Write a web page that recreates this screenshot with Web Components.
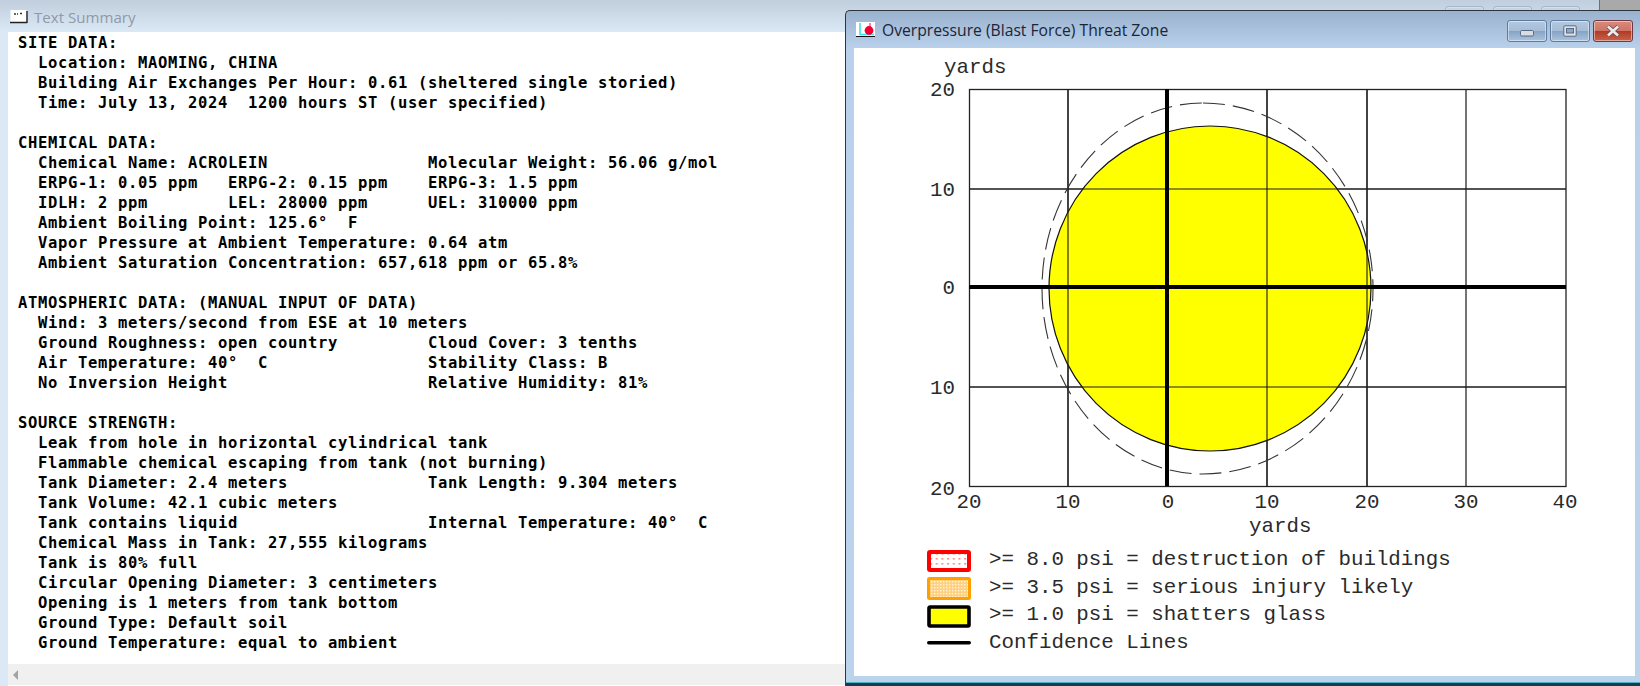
<!DOCTYPE html>
<html><head><meta charset="utf-8"><title>Threat Zone</title>
<style>html,body{margin:0;padding:0;width:1640px;height:686px;overflow:hidden;background:#fff}</style></head>
<body>
<app-desktop>
<text-window title-text="Text Summary"><pre>SITE DATA:
  Location: MAOMING, CHINA
  Building Air Exchanges Per Hour: 0.61 (sheltered single storied)
  Time: July 13, 2024  1200 hours ST (user specified)

CHEMICAL DATA:
  Chemical Name: ACROLEIN                Molecular Weight: 56.06 g/mol
  ERPG-1: 0.05 ppm   ERPG-2: 0.15 ppm    ERPG-3: 1.5 ppm
  IDLH: 2 ppm        LEL: 28000 ppm      UEL: 310000 ppm
  Ambient Boiling Point: 125.6°  F
  Vapor Pressure at Ambient Temperature: 0.64 atm
  Ambient Saturation Concentration: 657,618 ppm or 65.8%

ATMOSPHERIC DATA: (MANUAL INPUT OF DATA)
  Wind: 3 meters/second from ESE at 10 meters
  Ground Roughness: open country         Cloud Cover: 3 tenths
  Air Temperature: 40°  C                Stability Class: B
  No Inversion Height                    Relative Humidity: 81%

SOURCE STRENGTH:
  Leak from hole in horizontal cylindrical tank
  Flammable chemical escaping from tank (not burning)
  Tank Diameter: 2.4 meters              Tank Length: 9.304 meters
  Tank Volume: 42.1 cubic meters
  Tank contains liquid                   Internal Temperature: 40°  C
  Chemical Mass in Tank: 27,555 kilograms
  Tank is 80% full
  Circular Opening Diameter: 3 centimeters
  Opening is 1 meters from tank bottom
  Ground Type: Default soil
  Ground Temperature: equal to ambient</pre></text-window>
<threat-window title-text="Overpressure (Blast Force) Threat Zone">
  <threat-plot></threat-plot>
  <threat-legend>
    <legend-row kind="red">&gt;= 8.0 psi = destruction of buildings</legend-row>
    <legend-row kind="orange">&gt;= 3.5 psi = serious injury likely</legend-row>
    <legend-row kind="yellow">&gt;= 1.0 psi = shatters glass</legend-row>
    <legend-row kind="line">Confidence Lines</legend-row>
  </threat-legend>
</threat-window>
</app-desktop>
<script>
function def(name, html, init){
  customElements.define(name, class extends HTMLElement{
    constructor(){super();const r=this.attachShadow({mode:'open'});r.innerHTML=html;if(init)init(this,r);}
    connectedCallback(){const t=this.shadowRoot.querySelector('[data-title]');if(t)t.textContent=this.getAttribute('title-text')||'';
      const k=this.getAttribute('kind'),s=this.shadowRoot.getElementById('s');if(s&&k)s.innerHTML=swatch(k);}
  });
}
function swatch(k){
  if(k=='red')return `<svg width="44" height="22" viewBox="0 0 44 22"><defs><pattern id="p" x="1" y="1" width="5.7" height="5" patternUnits="userSpaceOnUse"><rect width="5.7" height="5" fill="#fff"/><rect x="2" y="2" width="2" height="1.6" fill="#f88"/></pattern></defs><rect x="2" y="2" width="40" height="18" rx="1" fill="url(#p)" stroke="#f00" stroke-width="4"/></svg>`;
  if(k=='orange')return `<svg width="44" height="23" viewBox="0 0 44 23"><defs><pattern id="p" width="3" height="3" patternUnits="userSpaceOnUse"><rect width="3" height="3" fill="#ffd080"/><rect x="1" y="1" width="1.4" height="1.4" fill="#fff4dc"/></pattern></defs><rect x="1.5" y="1.5" width="41" height="20" rx="1" fill="url(#p)" stroke="#ffa000" stroke-width="3"/></svg>`;
  if(k=='yellow')return `<svg width="44" height="23"><rect x="2" y="2" width="40" height="19" rx="1" fill="#ff0" stroke="#000" stroke-width="3.6"/></svg>`;
  return `<svg width="44" height="6"><rect y="1" width="44" height="3.6" rx="1.8" fill="#000"/></svg>`;
}
def('app-desktop',`<style>:host{display:block;position:relative;width:1640px;height:686px;overflow:hidden}</style><slot></slot>`);

def('text-window',`<style>
:host{display:flex;flex-direction:column;width:1640px;height:686px;background:#dce8f5;box-sizing:border-box}
.bar{height:32px;flex:none;display:flex;align-items:center;gap:6px;padding:0 0 0 10px;box-sizing:border-box;
 background:linear-gradient(#c0cedd,#dbe8f5);font:15.1px "Open Sans",sans-serif;color:#8f9aa6}
.bar>svg,.bar>span{position:relative;top:1px}
.sp{flex:1}
.mini{align-self:flex-start;margin:6px 3px 0 0;width:39px;height:20px;box-sizing:border-box;border:1px solid #a3b6ca;border-radius:3px;background:#c6d3e0;box-shadow:inset 0 0 0 1px #d7e0ea}
.mini.last{margin-right:13px}
.grey{align-self:stretch;width:40px;background:#a9a9a9;border-left:1px solid #6f6f6f}
.body{flex:1;margin-left:8px;background:#fff;display:flex;flex-direction:column;min-height:0}
.txt{flex:1;padding:1px 0 0 10px;min-height:0}
::slotted(pre){margin:0;font:bold 15.5px/20px "DejaVu Sans Mono",monospace;letter-spacing:.67px;color:#000}
.scroll{height:21px;flex:none;background:#f0f0f0;display:flex;align-items:center;padding-left:5px;margin-bottom:1px}
</style>
<div class="bar"><svg width="18" height="16" viewBox="0 0 18 16"><rect x=".5" y="1" width="16" height="12" fill="#fff"/><path d="M0 13.5H17M17 2V14" stroke="#222" stroke-width="1.4"/><path d="M4 5h2M7 5h1M10 4.5h2" stroke="#333" stroke-width="1.4"/></svg><span data-title></span><i class="sp"></i><i class="mini"></i><i class="mini"></i><i class="mini last"></i><i class="grey"></i></div>
<div class="body"><div class="txt"><slot></slot></div>
<div class="scroll"><svg width="6" height="10"><path d="M5 0V10L0 5Z" fill="#a3a3a3"/></svg></div></div>`);

def('window-buttons',`<style>
:host{display:flex;gap:3px}
.b{width:40px;height:22px;box-sizing:border-box;border:1px solid #5f7b9e;border-radius:3px;display:flex;align-items:center;justify-content:center;
 background:linear-gradient(#b4c9e0 0,#a6bdd7 48%,#86a2c2 50%,#a9c4e0 100%);box-shadow:inset 0 0 0 1px rgba(255,255,255,.45)}
.c{background:linear-gradient(#d98b7c 0,#cf7464 48%,#b03a22 50%,#c9624c 100%);border-color:#6b3a44}
.m{margin-top:4px}
</style>
<div class="b"><svg class="m" width="14" height="7" viewBox="0 0 14 7"><rect x=".5" y=".5" width="13" height="5.5" rx="1.2" fill="#d9dde2" stroke="#566a83"/></svg></div>
<div class="b"><svg width="14" height="12" viewBox="0 0 14 12"><rect x=".8" y=".8" width="12.4" height="10.4" rx="1" fill="#dfe3e8" stroke="#566a83"/><rect x="3.5" y="3.5" width="7" height="4.5" fill="#8aa7c7" stroke="#566a83"/></svg></div>
<div class="b c"><svg width="16" height="12" viewBox="0 0 16 12"><path d="M3 1.5L13 10.5M13 1.5L3 10.5" stroke="#6b444a" stroke-width="4.2"/><path d="M3 1.5L13 10.5M13 1.5L3 10.5" stroke="#e9ebee" stroke-width="2.8"/></svg></div>`);

def('threat-window',`<style>
:host{position:absolute;left:845px;top:10px;width:800px;height:676px;box-sizing:border-box;display:flex;flex-direction:column;
 border:1px solid #2c3640;border-right:0;border-radius:5px 0 0 0;background:linear-gradient(#9ab2ce,#b9d1eb 38px,#bcd3ec)}
.bar{height:37px;flex:none;display:flex;align-items:center;padding:0 4px 0 10px;box-sizing:border-box;font:15.7px "Open Sans",sans-serif;color:#1a2636;width:794px}
.bar span{margin-left:7px;flex:1}
.bar svg{flex:none}
.bar window-buttons{margin:3px 3px 0 0}
.client{margin-left:8px;width:781px;height:628px;background:#fff;flex:none;display:flex;flex-direction:column}
.foot{flex:1;border-bottom:2px solid #0f3f4f;box-shadow:inset 0 -1px 0 #4fb3c8}
</style>
<div class="bar"><svg width="19" height="16" viewBox="0 0 19 16"><rect width="19" height="14" fill="#fff"/><path d="M4 1V12.5H18" stroke="#35e4f2" stroke-width="1.6" fill="none"/><path d="M14 1V12" stroke="#ff3ad0" stroke-width="1.4"/><path d="M0 14.5H19" stroke="#111" stroke-width="1"/><circle cx="13" cy="8.5" r="4.4" fill="#f2002e"/></svg><span data-title></span><window-buttons></window-buttons></div>
<div class="client"><slot></slot></div><div class="foot"></div>`);

def('threat-plot',`<style>
:host{display:block;height:493px}
svg{display:block}
text{font:20.8px "Liberation Mono",monospace;fill:#2a2a2a}
</style>
<svg width="781" height="493" viewBox="854 48 781 493">
<path d="M1068 89V486M1267 89V486M1367 89V486M1466 89V486M969 189H1566M969 387H1566" stroke="#1a1a1a" stroke-width="1.2" fill="none"/>
<ellipse cx="1210" cy="288.5" rx="161" ry="162.5" fill="#ff0" stroke="#111" stroke-width="1.2"/>
<path d="M1068 89V486M1267 89V486M1367 89V486M969 189H1566M969 387H1566" stroke="#1a1a1a" stroke-width="1.1" fill="none"/>
<path d="M1203 103A170 185.5 0 0 1 1373 288.5A170 185.5 0 0 1 1203 474A161 185.5 0 0 1 1042 288.5A161 185.5 0 0 1 1203 103Z" fill="none" stroke="#333" stroke-width="1.1" stroke-dasharray="22 8"/>
<rect x="969.5" y="89.5" width="596.5" height="397" fill="none" stroke="#222" stroke-width="1.3"/>
<path d="M1167 89V486" stroke="#000" stroke-width="4"/><path d="M969 287H1566" stroke="#000" stroke-width="4"/>
<text x="944" y="73">yards</text>
<g text-anchor="end"><text x="955" y="96">20</text><text x="955" y="196">10</text><text x="955" y="294">0</text><text x="955" y="394">10</text><text x="955" y="495">20</text></g>
<g text-anchor="middle"><text x="969" y="508">20</text><text x="1068" y="508">10</text><text x="1168" y="508">0</text><text x="1267" y="508">10</text><text x="1367" y="508">20</text><text x="1466" y="508">30</text><text x="1565" y="508">40</text></g>
<text x="1249" y="532">yards</text>
</svg>`);

def('threat-legend',`<style>:host{display:flex;flex-direction:column;padding:5px 0 0 73px}</style><slot></slot>`);

def('legend-row',`<style>
:host{display:flex;align-items:center;height:27.6px;gap:18px;font:20.8px "Liberation Mono",monospace;color:#2a2a2a;white-space:pre}
:host(:not([kind=line])) #s{margin-top:3px}
#s{width:44px;display:flex;align-items:center;flex:none}
svg{display:block}
</style><div id="s"></div><slot></slot>`);
</script>
</body></html>
